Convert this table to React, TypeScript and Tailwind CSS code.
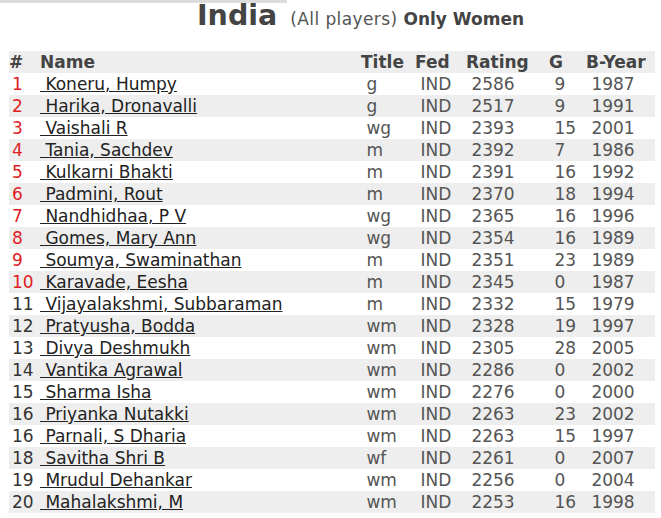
import React from "react";

type Row = [string, string, string, string, string, string, string];

const rows: Row[] = [
  ["1", "Koneru, Humpy", "g", "IND", "2586", "9", "1987"],
  ["2", "Harika, Dronavalli", "g", "IND", "2517", "9", "1991"],
  ["3", "Vaishali R", "wg", "IND", "2393", "15", "2001"],
  ["4", "Tania, Sachdev", "m", "IND", "2392", "7", "1986"],
  ["5", "Kulkarni Bhakti", "m", "IND", "2391", "16", "1992"],
  ["6", "Padmini, Rout", "m", "IND", "2370", "18", "1994"],
  ["7", "Nandhidhaa, P V", "wg", "IND", "2365", "16", "1996"],
  ["8", "Gomes, Mary Ann", "wg", "IND", "2354", "16", "1989"],
  ["9", "Soumya, Swaminathan", "m", "IND", "2351", "23", "1989"],
  ["10", "Karavade, Eesha", "m", "IND", "2345", "0", "1987"],
  ["11", "Vijayalakshmi, Subbaraman", "m", "IND", "2332", "15", "1979"],
  ["12", "Pratyusha, Bodda", "wm", "IND", "2328", "19", "1997"],
  ["13", "Divya Deshmukh", "wm", "IND", "2305", "28", "2005"],
  ["14", "Vantika Agrawal", "wm", "IND", "2286", "0", "2002"],
  ["15", "Sharma Isha", "wm", "IND", "2276", "0", "2000"],
  ["16", "Priyanka Nutakki", "wm", "IND", "2263", "23", "2002"],
  ["16", "Parnali, S Dharia", "wm", "IND", "2263", "15", "1997"],
  ["18", "Savitha Shri B", "wf", "IND", "2261", "0", "2007"],
  ["19", "Mrudul Dehankar", "wm", "IND", "2256", "0", "2004"],
  ["20", "Mahalakshmi, M", "wm", "IND", "2253", "16", "1998"],
];

const NB = "\u00a0";

export default function App() {
  return (
    <div
      className="w-[661px] h-[518px] bg-white overflow-hidden text-[#555]"
      style={{ fontFamily: '"DejaVu Sans", Verdana, sans-serif' }}
    >
      <div className="w-[287px] h-[3px] bg-[#dcdcdc]" />
      <div className="pl-[197px] leading-[25px] whitespace-nowrap">
        <span className="text-[28.5px] font-bold text-[#444]">India</span>
        <span className="text-[17px] text-[#555] ml-[13px] tracking-[0.4px]">(All players)</span>
        <span className="text-[17px] font-bold text-[#444]"> Only Women</span>
      </div>
      <table className="mt-[19px] ml-[9px] w-[646px] table-fixed border-collapse text-[17px] leading-[22px]">
        <colgroup>
          <col className="w-[31px]" />
          <col className="w-[321px]" />
          <col className="w-[54px]" />
          <col className="w-[51px]" />
          <col className="w-[83px]" />
          <col className="w-[37px]" />
          <col className="w-[69px]" />
        </colgroup>
        <thead>
          <tr className="bg-[#eeeeee] h-[22px] text-[#444] font-bold text-left">
            <th className="p-0 font-bold">#</th>
            <th className="p-0 font-bold">Name</th>
            <th className="p-0 font-bold">Title</th>
            <th className="p-0 font-bold">Fed</th>
            <th className="p-0 font-bold">Rating</th>
            <th className="p-0 font-bold">G</th>
            <th className="p-0 font-bold">B-Year</th>
          </tr>
        </thead>
        <tbody>
          {rows.map((r, i) => (
            <tr key={i} className={(i % 2 === 1 ? "bg-[#eeeeee] " : "bg-white ") + "h-[22px]"}>
              <td
                className={
                  (i < 10 ? "text-[#e0201f] " : "text-[#333] ") +
                  "p-0 pl-[3px] whitespace-nowrap"
                }
              >
                {r[0]}
              </td>
              <td className="p-0 whitespace-nowrap">
                <a className="text-[#222] underline decoration-[#222]">{NB + r[1]}</a>
              </td>
              <td className="p-0 whitespace-nowrap">{NB + r[2]}</td>
              <td className="p-0 whitespace-nowrap">{NB + r[3]}</td>
              <td className="p-0 whitespace-nowrap">{NB + r[4]}</td>
              <td className="p-0 whitespace-nowrap">{NB + r[5]}</td>
              <td className="p-0 whitespace-nowrap">{NB + r[6]}</td>
            </tr>
          ))}
        </tbody>
      </table>
    </div>
  );
}
